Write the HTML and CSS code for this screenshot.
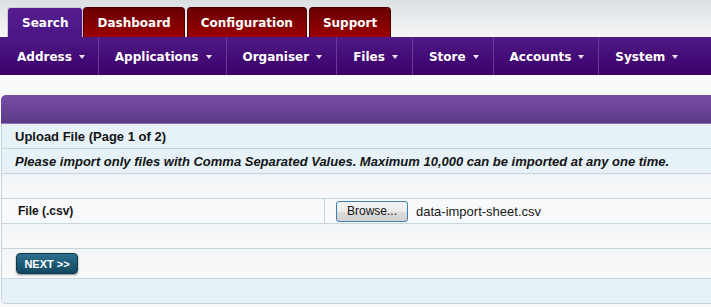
FILE: index.html
```html
<!DOCTYPE html>
<html lang="en">

<head>
  <meta charset="UTF-8">
  <meta name="viewport" content="width=device-width, initial-scale=1.0">
  <title>Upload File</title>
  <link rel="stylesheet" href="styles.css">
</head>

<body>
  <div class="topTabs">
    <a class="tab activeTab" href="#">Search</a>
    <a class="tab" href="#">Dashboard</a>
    <a class="tab" href="#">Configuration</a>
    <a class="tab" href="#">Support</a>
  </div>

  <nav class="menuBar">
    <a class="menuItem" href="#">Address<span class="caret"></span></a>
    <a class="menuItem" href="#">Applications<span class="caret"></span></a>
    <a class="menuItem" href="#">Organiser<span class="caret"></span></a>
    <a class="menuItem" href="#">Files<span class="caret"></span></a>
    <a class="menuItem" href="#">Store<span class="caret"></span></a>
    <a class="menuItem" href="#">Accounts<span class="caret"></span></a>
    <a class="menuItem" href="#">System<span class="caret"></span></a>
  </nav>

  <div class="panel">
    <div class="panelHead"></div>
    <div class="row rowTitle">Upload File (Page 1 of 2)</div>
    <div class="row rowNote">Please import only files with Comma Separated Values. Maximum 10,000 can be imported at any one time.</div>
    <div class="row rowBlank"></div>
    <div class="row rowField">
      <div class="fieldLabel">File (.csv)</div>
      <div class="fieldValue">
        <button class="browseBtn" type="button">Browse...</button>
        <span class="fileName">data-import-sheet.csv</span>
      </div>
    </div>
    <div class="row rowBlank"></div>
    <div class="row rowActions">
      <button class="nextBtn" type="button">NEXT &gt;&gt;</button>
    </div>
    <div class="panelFoot"></div>
  </div>
</body>

</html>
```

FILE: styles.css
```css
:root {
  --rowBorder: #c6d4de;
  --rowBlue: #e6f2f8;
}

body {
  margin: 0;
  background: #f8fafb;
  font-family: "Liberation Sans", Arial, sans-serif;
  overflow: hidden;
}

/* top tabs */
.topTabs {
  display: flex;
  align-items: flex-end;
  height: 37px;
  padding-left: 7px;
  background: linear-gradient(#dce0e3, #f5f6f7);
}

.tab {
  display: flex;
  align-items: center;
  height: 29px;
  padding: 0 13px;
  margin-right: 2px;
  border: 1px solid #4c0000;
  border-bottom: 0;
  border-radius: 4px 4px 0 0;
  background: linear-gradient(#680000, #9c0000);
  color: #fff;
  font-family: "DejaVu Sans", Verdana, sans-serif;
  font-weight: bold;
  font-size: 12px;
  text-decoration: none;
}

.activeTab {
  padding: 0 14px;
  margin-right: 0;
  border-color: #cfc8db;
  background: linear-gradient(#581d91, #4a1585);
}

/* purple menu */
.menuBar {
  display: flex;
  height: 38px;
  background: linear-gradient(#4f1985, #3b006a);
}

.menuItem {
  display: flex;
  align-items: center;
  padding: 1px 14px 0 16px;
  border-right: 1px solid #69399a;
  color: #fff;
  font-family: "DejaVu Sans", Verdana, sans-serif;
  font-weight: bold;
  font-size: 12px;
  text-decoration: none;
}

.menuItem:first-child {
  padding-left: 17px;
  padding-right: 13px;
}

.menuItem:last-child {
  border-right: 0;
}

.caret {
  width: 0;
  height: 0;
  margin-left: 7px;
  border-top: 4px solid #ece4f4;
  border-left: 3.5px solid transparent;
  border-right: 3.5px solid transparent;
}

/* panel */
.panel {
  margin: 20px -6px 0 1px;
  border: 1px solid var(--rowBorder);
  border-top: 0;
  border-radius: 5px;
  background: var(--rowBlue);
  color: #141414;
}

.panelHead {
  height: 28px;
  margin: 0 -1px;
  border-radius: 5px 5px 0 0;
  border-bottom: 1px solid #8f72b4;
  background: linear-gradient(#7a4ea6, #5a3a88);
}

.row {
  display: flex;
  align-items: center;
  height: 24px;
  padding-left: 13px;
  border-bottom: 1px solid var(--rowBorder);
}

.rowTitle {
  font-weight: bold;
  font-size: 13px;
}

.rowNote {
  font-weight: bold;
  font-style: italic;
  font-size: 13px;
}

.rowBlank {
  background: linear-gradient(#f1f4f6, #f8f9fa);
}

.rowField {
  padding-left: 0;
  background: #f8f9fa;
}

.fieldLabel {
  display: flex;
  align-items: center;
  width: 306px;
  height: 100%;
  padding-left: 16px;
  border-right: 1px solid var(--rowBorder);
  font-weight: bold;
  font-size: 12px;
}

.fieldValue {
  display: flex;
  align-items: center;
  padding-left: 11px;
}

.browseBtn {
  width: 72px;
  height: 21px;
  padding: 0;
  border: 1px solid #3d7fb0;
  border-radius: 3px;
  background: linear-gradient(#f3f3f3 0%, #ebebeb 50%, #dcdcdc 51%, #d2d2d2 100%);
  color: #111;
  font-family: "Liberation Sans", Arial, sans-serif;
  font-size: 12px;
}

.fileName {
  margin-left: 8px;
  font-size: 13px;
  color: #1a1a1a;
}

.rowActions {
  height: 29px;
  padding-left: 14px;
  background: linear-gradient(#f2f4f6, #f9fafb);
}

.nextBtn {
  width: 62px;
  height: 21px;
  padding: 0;
  border: 1px solid #0b3548;
  border-radius: 4px;
  background: linear-gradient(#2c6f8d, #124860);
  box-shadow: 0 1px 2px rgba(0, 0, 0, 0.45);
  color: #fff;
  font-family: "Liberation Sans", Arial, sans-serif;
  font-weight: bold;
  font-size: 11px;
}

.panelFoot {
  height: 24px;
  border-radius: 0 0 5px 5px;
}
```
